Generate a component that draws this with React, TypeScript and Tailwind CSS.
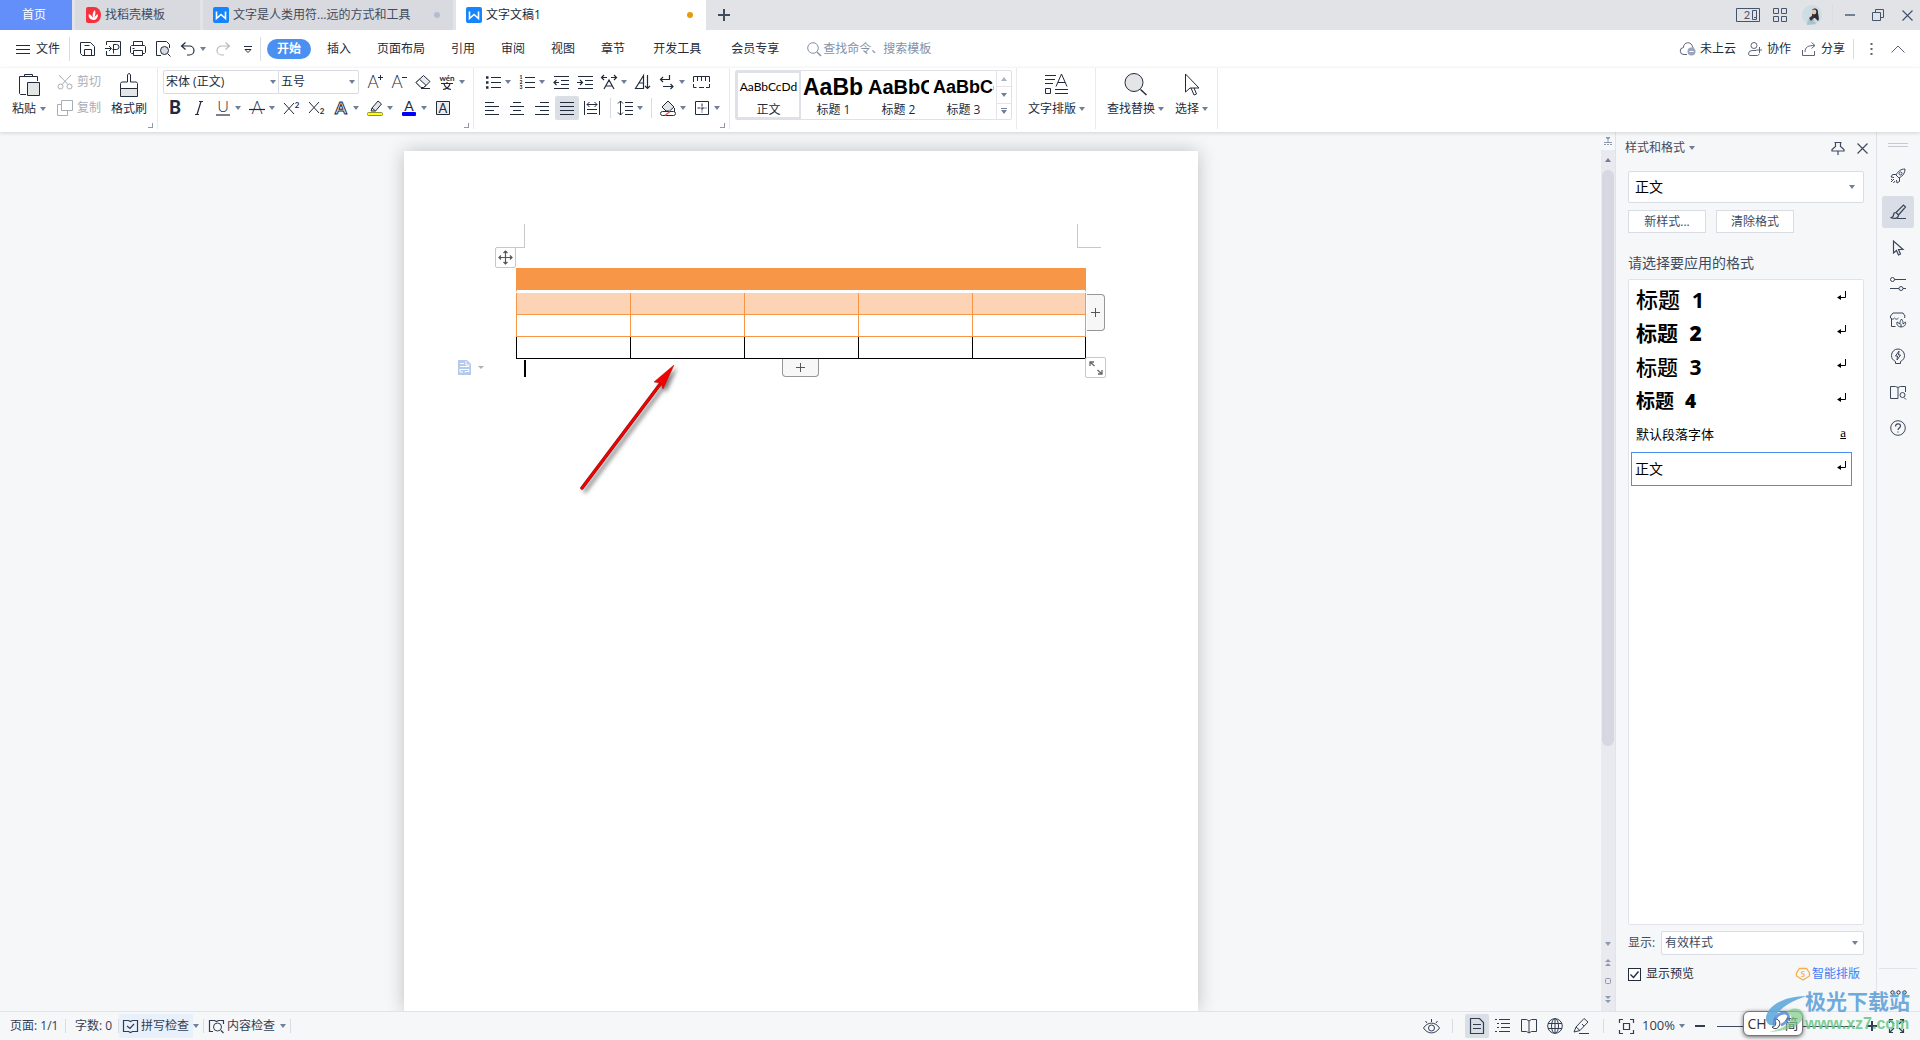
import type { ReactNode } from 'react'

type IconProps = { w?: number; h?: number; className?: string; children?: ReactNode }

function Icon({ w = 16, h = 16, className = '', children }: IconProps) {
  return (
    <svg
      width={w}
      height={h}
      viewBox={`0 0 ${w} ${h}`}
      fill="none"
      stroke="currentColor"
      className={`shrink-0 overflow-visible ${className}`}
      aria-hidden="true"
    >
      {children}
    </svg>
  )
}

function Caret({ className = '' }: { className?: string }) {
  return (
    <svg width="6" height="4" viewBox="0 0 6 4" className={`shrink-0 fill-[#6f7f99] ${className}`} aria-hidden="true">
      <path d="M0 0h6L3 4z" />
    </svg>
  )
}

function Letter({ x = 8, y = 14, size = 16, weight = 300, children }: { x?: number; y?: number; size?: number; weight?: number; children: ReactNode }) {
  return (
    <text x={x} y={y} fontSize={size} fontWeight={weight} textAnchor="middle" fill="currentColor" stroke="none" fontFamily="Lato, sans-serif">
      {children}
    </text>
  )
}

function Tool({ label, icon, caret }: { label: string; icon: ReactNode; caret?: boolean }) {
  return (
    <button type="button" aria-label={label} className="flex items-center gap-1">
      {icon}
      {caret && <Caret />}
    </button>
  )
}

function CornerMark() {
  return <span className="absolute right-[4px] bottom-px h-[5px] w-[5px] border-r border-b border-[#8d99ae]" />
}

function Divider({ className = '' }: { className?: string }) {
  return <span className={`w-px shrink-0 bg-[#d9dce2] ${className}`} />
}

/* ---------- title bar ---------- */

function WriterLogo() {
  return (
    <svg width="16" height="16" viewBox="0 0 16 16" className="shrink-0" aria-hidden="true">
      <rect width="16" height="16" rx="2" fill="#1684fc" />
      <path d="M3.500 4.500v7L8 7.500l4.500 4v-7" fill="none" stroke="#fff" strokeWidth="1.600" />
    </svg>
  )
}

function TitleBar() {
  return (
    <header className="flex h-[30px] shrink-0 items-stretch bg-[#e1e3e7] text-[#414b60]">
      <button type="button" className="w-[72px] bg-[#628ffa] pr-1 text-white">
        首页
      </button>
      <button type="button" className="ml-[3px] flex w-[125px] items-center gap-1 bg-[#d8dadf] pl-[11px]">
        <svg width="15" height="16" viewBox="0 0 15 16" aria-hidden="true">
          <path d="M0 2a2 2 0 0 1 2-2h6a7 8 0 0 1 0 16H2a2 2 0 0 1-2-2z" fill="#f6303c" />
          <path d="M7 13c-4-1-5-4-4-6 2 1 3 2 4 4-1-4 0-6 2-8 1 3 0 6-1 8 1-2 2-3 4-4 0 4-2 6-5 6z" fill="#fff" />
        </svg>
        找稻壳模板
      </button>
      <button type="button" className="ml-[3px] flex w-[250px] items-center bg-[#d8dadf] pl-[10px]">
        <WriterLogo />
        <span className="ml-1">文字是人类用符...远的方式和工具</span>
        <span className="mr-[13px] ml-auto h-[6px] w-[6px] rounded-full bg-[#b4bdd0]" />
      </button>
      <button type="button" className="ml-[3px] flex w-[250px] items-center bg-white pl-[10px] text-[#222b3c]">
        <WriterLogo />
        <span className="ml-1">文字文稿1</span>
        <span className="mr-[13px] ml-auto h-[6px] w-[6px] rounded-full bg-[#e69a0c]" />
      </button>
      <button type="button" aria-label="新建标签" className="ml-3 text-[#414b60]">
        <Icon w={12} h={12}>
          <path d="M6 0v12M0 6h12" strokeWidth="2" />
        </Icon>
      </button>
      <div className="ml-auto flex items-center pr-[7px] text-[#44546f]">
        <button type="button" aria-label="窗口布局">
          <Icon w={24} h={14}>
            <path d="M.5.5h23v13H.5zM16.500 2.500h4v9h-4zM18 9.500h2" />
            <Letter x={11} y={11} size={11} weight={400}>2</Letter>
          </Icon>
        </button>
        <button type="button" aria-label="应用" className="ml-[13px]">
          <Icon w={14} h={14}>
            <path d="M.5.5h5v5h-5zM8.500.5h5v5h-5zM.5 8.500h5v5h-5zM8.500 8.500h5v5h-5z" />
          </Icon>
        </button>
        <button type="button" aria-label="账号" className="ml-[15px]">
          <svg width="20" height="20" viewBox="0 0 20 20" aria-hidden="true">
            <circle cx="10" cy="10" r="10" fill="#ccdde3" />
            <path d="M10 5c3-3 6-1 6 2s2 7 0 9l-3-3-3 0z" fill="#332a30" />
            <circle cx="12" cy="7" r="2.400" fill="#e8c5b5" />
            <path d="M5 20c0-5 2-7 6-7l3 6z" fill="#a9c4cf" />
            <path d="M7 13l4-3 1 3-3 3z" fill="#40343a" />
          </svg>
        </button>
        <Divider className="ml-[10px] h-5 bg-[#c5c9d1]" />
        <button type="button" aria-label="最小化" className="ml-3">
          <Icon w={10} h={10}><path d="M0 5h10" strokeWidth="1.400" /></Icon>
        </button>
        <button type="button" aria-label="还原" className="ml-[17px]">
          <Icon w={13} h={13}><path d="M.5 3.500h8v8h-8zM3.500 3.500v-3h8v8h-3" /></Icon>
        </button>
        <button type="button" aria-label="关闭" className="ml-[17px]">
          <Icon w={11} h={11}><path d="M.5.5l10 10M10.500.5l-10 10" strokeWidth="1.200" /></Icon>
        </button>
      </div>
    </header>
  )
}

/* ---------- menu bar ---------- */

const coreMenus = ['开始', '插入', '页面布局', '引用', '审阅', '视图', '章节']
const extraMenus = ['开发工具', '会员专享']

function MenuBar() {
  return (
    <div className="flex h-[38px] shrink-0 items-center bg-white pl-4">
      <button type="button" className="flex items-center gap-[6px]">
        <Icon w={14} h={11}><path d="M0 1.500h14M0 5.500h14M0 9.500h14" /></Icon>
        文件
      </button>
      <Divider className="mr-[10px] ml-[9px] h-6" />
      <div className="flex items-center gap-[9px]">
        <Tool label="保存" icon={<Icon><path d="M.5 1.500h10l4 4v9H2.500l-2-2zM4.500 14.500v-6h7v6M4.500 4.500h5" /></Icon>} />
        <Tool label="输出为PDF" icon={<Icon><path d="M1.500 4V.5h14v14h-14V10M0 7.500h6M4 5l2.500 2.500L4 10M8.500 12.500v-9h3a2.300 2.300 0 0 1 0 5h-4" /></Icon>} />
        <Tool label="打印" icon={<Icon><path d="M3.500 4.500v-4h9v4M3.500 12.500h-2l-1-1v-6l1-1h13l1 1v6l-1 1h-2M3.500 9.500h9v5h-9zM2.500 7.500h2" /></Icon>} />
        <Tool label="打印预览" icon={<Icon><path d="M6 14.500H1.500V.5h10l3 3V7M13 13l2.500 2.500" /><circle cx="9.500" cy="9.500" r="4" fill="#d9dce2" /></Icon>} />
        <Tool label="撤销" caret icon={<Icon><path d="M5.500 1.500l-4 3.500 4 3.500M2 5h7.500a4.500 4.500 0 0 1 0 9H7" strokeWidth="1.200" /></Icon>} />
        <Tool label="恢复" icon={<Icon className="text-[#b6bac2]"><path d="M10.500 1.500l4 3.500-4 3.500M14 5H6.500a4.500 4.500 0 0 0 0 9H9" strokeWidth="1.200" /></Icon>} />
        <Tool label="自定义快速访问工具栏" icon={<Icon><path d="M4 5.500h8M5 8.500l3 3 3-3z" /></Icon>} />
      </div>
      <Divider className="ml-1 h-6" />
      <nav className="ml-[6px] flex gap-2">
        <div className="flex gap-[6px]">
          {coreMenus.map((menu, i) => (
            <button
              key={menu}
              type="button"
              className={`h-5 rounded-full px-[10px] leading-5 ${i === 0 ? 'bg-[#4a90f2] font-bold text-white' : ''}`}
            >
              {menu}
            </button>
          ))}
        </div>
        <div className="flex gap-[10px]">
          {extraMenus.map((menu) => (
            <button key={menu} type="button" className="h-5 rounded-full px-[10px] leading-5">
              {menu}
            </button>
          ))}
        </div>
      </nav>
      <label className="ml-[18px] flex items-center gap-[2px] text-[#8390a8]">
        <Icon w={14} h={14}>
          <circle cx="6" cy="6" r="5.300" />
          <path d="M10 10l4 4" strokeWidth="1.400" />
        </Icon>
        <input aria-label="查找命令" placeholder="查找命令、搜索模板" className="w-[130px] outline-none placeholder:text-[#8390a8]" />
      </label>
      <div className="ml-auto flex items-center pr-[15px]">
        <button type="button" className="flex items-center gap-1">
          <Icon className="text-[#5b6478]">
            <path d="M7 13.500H4a3.500 3.500 0 0 1-.5-7 4.500 4.500 0 0 1 9-.5l1 1" />
            <circle cx="11.500" cy="10.500" r="4" fill="#9aa6bd" stroke="none" />
            <path d="M9.500 10.500h4" stroke="#fff" />
          </Icon>
          未上云
        </button>
        <button type="button" className="ml-3 flex items-center gap-[5px]">
          <Icon w={14} h={14} className="text-[#5b6478]">
            <circle cx="6" cy="3.500" r="3" />
            <path d="M8.500 8.500H4a3.500 3.500 0 0 0-3.500 3.500l1 1.500h8l2-1.500M11.500 5v6M8.500 8h5.500" />
          </Icon>
          协作
        </button>
        <button type="button" className="ml-[11px] flex items-center gap-[5px]">
          <Icon w={14} h={14} className="text-[#5b6478]"><path d="M.5 8v5.500h12V9M3 10c0-5 3-6.500 9.500-6.500M9.500.5l3.500 3-3.500 3" /></Icon>
          分享
        </button>
        <Divider className="ml-2 h-5" />
        <button type="button" aria-label="更多" className="ml-4 text-[#5b6478]">
          <Icon w={3} h={12}><path d="M1.500 0v2M1.500 5v2M1.500 10v2" strokeWidth="2" /></Icon>
        </button>
        <button type="button" aria-label="收起功能区" className="ml-[18px]">
          <Icon w={14} h={8} className="text-[#5b6478]"><path d="M.5 7.500L7 1l6.500 6.500" /></Icon>
        </button>
      </div>
    </div>
  )
}

/* ---------- ribbon ---------- */

function ClipboardGroup() {
  return (
    <section aria-label="剪贴板" className="relative flex w-[158px] border-r border-[#e8eaee] pt-px pl-3">
      <button type="button" className="flex flex-col items-center gap-1 pt-1">
        <Icon w={24} h={24}>
          <path d="M9 21.500H3.500l-1-1v-17h18V8M7.500 3.500v-2h8v2z" />
          <path d="M10.500 9.500h12v13h-12z" fill="#e4e5e7" />
        </Icon>
        <span className="flex items-center gap-1 leading-4">粘贴<Caret /></span>
      </button>
      <div className="ml-[11px] text-[#a9adb5]">
        <button type="button" disabled className="flex h-[26px] items-center gap-1">
          <Icon>
            <circle cx="3.500" cy="12.500" r="2.500" />
            <circle cx="12.500" cy="12.500" r="2.500" />
            <path d="M2 1l9 9.500M14 1l-9 9.500" />
          </Icon>
          剪切
        </button>
        <button type="button" disabled className="flex h-[26px] items-center gap-1">
          <Icon><path d="M4.500.5h11v10h-11zM4.500 4.500h-4v11h10v-5" /></Icon>
          复制
        </button>
      </div>
      <button type="button" className="ml-[10px] flex flex-col items-center gap-1 pt-1">
        <Icon w={20} h={24}>
          <path d="M8.500 9V2l1-1.500h1l1 1.500v7h6l1 1.500v5h-17v-5L2.500 9z" />
          <path d="M1.500 15.500h17v8h-17z" fill="#e4e5e7" />
        </Icon>
        <span className="leading-4">格式刷</span>
      </button>
      <CornerMark />
    </section>
  )
}

function FontGroup() {
  return (
    <section aria-label="字体" className="relative w-[316px] border-r border-[#e8eaee] pt-px pl-[5px]">
      <div className="flex h-[26px] items-center gap-2">
        <div className="flex h-6 w-[196px] items-center rounded-xs border border-[#d9dce2]">
          <label className="relative flex h-full w-[115px] items-center border-r border-[#d9dce2]">
            <select aria-label="字体名称" className="w-full appearance-none pl-[2px] outline-none">
              <option>宋体 (正文)</option>
            </select>
            <Caret className="absolute right-[2px]" />
          </label>
          <label className="relative flex h-full flex-1 items-center">
            <select aria-label="字号" className="w-full appearance-none pl-[2px] outline-none">
              <option>五号</option>
            </select>
            <Caret className="absolute right-[3px]" />
          </label>
        </div>
        <Tool label="增大字号" icon={<Icon><Letter x={6} y={14} size={17}>A</Letter><path d="M13.500 1v5M11 3.500h5" /></Icon>} />
        <Tool label="减小字号" icon={<Icon><Letter x={6} y={14} size={17}>A</Letter><path d="M11 3.500h5" /></Icon>} />
        <Tool label="清除格式" icon={<Icon><path d="M1 8.500L8.500 1.500l6.500 6-6 6H6z" fill="#e9eaec" /><path d="M1 8.500l3.500-3.200 6.500 6-2.500 2.200H6zM6 14.500h9" fill="#fff" /></Icon>} />
        <Tool
          label="拼音指南"
          caret
          icon={<Icon><Letter y={7} size={8} weight={700}>wén</Letter><path d="M2 9.500h12M8 8v1.500M5 10c1 3 4 5 7 5.500M11 10c-1 3-4 5-7 5.500" strokeWidth="1.200" /></Icon>}
        />
      </div>
      <div className="flex h-[26px] items-center gap-2 pl-1">
        <Tool label="加粗" icon={<Icon><Letter y={14} size={18} weight={900}>B</Letter></Icon>} />
        <Tool label="倾斜" icon={<Icon><path d="M8 1.500h4M4 14.500h4M10 1.500L6 14.500" strokeWidth="1.200" /></Icon>} />
        <Tool label="下划线" caret icon={<Icon><Letter y={12} size={16}>U</Letter><path d="M1 15h14" strokeWidth="1.200" /></Icon>} />
        <Tool label="删除线" caret icon={<Icon><Letter y={14} size={17}>A</Letter><path d="M0 9.500h16" strokeWidth="1.200" /></Icon>} />
        <Tool label="上标" icon={<Icon w={17}><path d="M1 3l10 11M11 3L1 14" /><Letter x={14} y={8} size={8} weight={700}>2</Letter></Icon>} />
        <Tool label="下标" icon={<Icon w={17}><path d="M1 2l10 11M11 2L1 13" /><Letter x={14} y={14} size={8} weight={700}>2</Letter></Icon>} />
        <Tool
          label="文字效果"
          caret
          icon={
            <Icon>
              <text x="8" y="14" fontSize="17" fontWeight="700" textAnchor="middle" fill="#fff" stroke="currentColor" strokeWidth="1" fontFamily="Lato, sans-serif">A</text>
            </Icon>
          }
        />
        <Tool
          label="突出显示"
          caret
          icon={<Icon><path d="M5 8l6-7 3.500 3-6 7zM5 8l-1 3h4.500" fill="#e4e5e7" /><rect x=".5" y="12.500" width="15" height="3" rx="1" fill="#ff0" stroke="#8a8f3a" /></Icon>}
        />
        <Tool label="字体颜色" caret icon={<Icon><Letter y={11} size={14} weight={400}>A</Letter><rect x="1" y="12" width="14" height="4" rx="1" fill="#00f" stroke="none" /></Icon>} />
        <Tool label="字符底纹" icon={<Icon><path d="M1.500 1.500h13v13h-13z" fill="#ebecee" /><Letter y={13} size={13} weight={400}>A</Letter></Icon>} />
      </div>
      <CornerMark />
    </section>
  )
}

const alignIcons = [
  { label: '左对齐', d: 'M1 2.500h9M1 6.500h14M1 10.500h9M1 14.500h14' },
  { label: '居中对齐', d: 'M4 2.500h8M1 6.500h14M4 10.500h8M1 14.500h14' },
  { label: '右对齐', d: 'M6 2.500h9M1 6.500h14M6 10.500h9M1 14.500h14' },
  { label: '两端对齐', d: 'M1 2.500h14M1 6.500h14M1 10.500h14M1 14.500h14' },
  { label: '分散对齐', d: 'M.5 1v14M15.500 1v14M3 4.500h10M5.500 2L3 4.500 5.500 7M10.500 2L13 4.500 10.500 7M3 9.500h10M3 13.500h10' },
]

function ParagraphGroup() {
  return (
    <section aria-label="段落" className="relative w-[256px] border-r border-[#e8eaee] pt-px">
      <div className="flex h-[26px] items-center gap-2 pl-[11px]">
        <Tool label="项目符号" caret icon={<Icon><path d="M6 3.500h10M6 8.500h10M6 13.500h10" /><path d="M1 3.500h2.500M1 8.500h2.500M1 13.500h2.500" strokeWidth="2.500" /></Icon>} />
        <Tool
          label="编号"
          caret
          icon={<Icon><path d="M6 3.500h10M6 8.500h10M6 13.500h10" /><Letter x={2} y={5} size={5} weight={900}>1</Letter><Letter x={2} y={10} size={5} weight={900}>2</Letter><Letter x={2} y={15} size={5} weight={900}>3</Letter></Icon>}
        />
        <Tool label="减少缩进量" icon={<Icon><path d="M1 2.500h15M8 6.500h8M8 10.500h8M1 14.500h15M1 8.500h5M3.500 6L1 8.500 3.500 11" strokeWidth="1.200" /></Icon>} />
        <Tool label="增加缩进量" icon={<Icon><path d="M1 2.500h15M8 6.500h8M8 10.500h8M1 14.500h15M0 8.500h5.500M3 6l2.500 2.500L3 11" strokeWidth="1.200" /></Icon>} />
        <Tool label="中文版式" caret icon={<Icon><path d="M3 15l5-9 5 9M5 12h6M.5 3.500H6M3 1L.5 3.500 3 6M10 3.500h5.500M13 1l2.500 2.500L13 6" strokeWidth="1.200" /></Icon>} />
        <Tool label="排序" icon={<Icon><path d="M.5 14.500L8.500 1.500v13zM4 9h4.500M12.500 1v13M10 12l2.500 2.500L15 12" strokeWidth="1.200" /></Icon>} />
        <Tool label="显示/隐藏编辑标记" caret icon={<Icon><path d="M10.500 1v4.500H1.500M4 3L1.500 5.500 4 8M4 12.500h10M11.500 10l2.500 2.500-2.500 2.500" strokeWidth="1.200" /></Icon>} />
        <Tool label="制表位" icon={<Icon><path d="M.5 8V2.500h16V8M4.500 3v4M8.500 3v4M12.500 3v4M.5 10v3.500h3M6 13.500h5M13 13.500h3.500V10" /></Icon>} />
      </div>
      <div className="flex h-[26px] items-center pl-[6px]">
        <div className="flex gap-px">
          {alignIcons.map(({ label, d }) => (
            <button
              key={label}
              type="button"
              aria-label={label}
              className={`flex h-6 w-6 items-center justify-center rounded-xs ${label === '两端对齐' ? 'bg-[#dadfe5]' : ''}`}
            >
              <Icon><path d={d} /></Icon>
            </button>
          ))}
        </div>
        <Divider className="mx-[6px] h-5" />
        <Tool label="行距" caret icon={<Icon><path d="M3.500 1v14M1 3.500L3.500 1 6 3.500M1 12.500L3.500 15 6 12.500M8 2.500h8M8 6.500h8M8 10.500h8M8 14.500h8" /></Icon>} />
        <Divider className="mx-2 h-5" />
        <Tool
          label="底纹颜色"
          caret
          icon={<Icon><path d="M2 7l6-6 6 6-4.500 4H6z" fill="#e4e5e7" /><path d="M14.500 8v4" /><rect x=".5" y="11.500" width="15" height="4" rx="2" fill="#fff" /><path d="M5 15.500l5-4" stroke="#e05a5a" strokeWidth="1.500" /></Icon>}
        />
        <span className="w-2" />
        <Tool label="边框" caret icon={<Icon><path d="M1.500 1.500h13v13h-13z" /><path d="M8 3.500v9M3.500 8h9" strokeDasharray="3 1" /></Icon>} />
      </div>
      <CornerMark />
    </section>
  )
}

const stylePresets = [
  { name: '正文', sample: 'AaBbCcDd', cls: "text-xs font-['Lato']" },
  { name: '标题 1', sample: 'AaBb', cls: "text-[23px] font-bold font-['Liberation_Sans']" },
  { name: '标题 2', sample: 'AaBbC', cls: "text-[20px] font-bold font-['Liberation_Sans']" },
  { name: '标题 3', sample: 'AaBbCc', cls: "text-[18px] font-bold font-['Liberation_Sans']" },
]

function StylesGroup() {
  return (
    <section aria-label="样式" className="w-[287px] border-r border-[#e8eaee] pt-[2px] pl-[5px]">
      <div className="flex h-[50px] w-[277px] rounded-xs border border-[#dfe1e6]">
        {stylePresets.map(({ name, sample, cls }, i) => (
          <button
            key={name}
            type="button"
            className={`flex w-[65px] flex-col items-center overflow-hidden px-[2px] ${i === 0 ? 'outline-2 -outline-offset-2 outline-[#dfe1e8]' : ''}`}
          >
            <span className={`flex h-8 w-full items-center overflow-hidden whitespace-nowrap text-black ${i === 0 ? 'justify-center' : ''} ${cls}`}>
              {sample}
            </span>
            <span className="leading-[14px]">{name}</span>
          </button>
        ))}
        <div className="flex flex-1 flex-col divide-y divide-[#e3e5ea] border-l border-[#e3e5ea]">
          <button type="button" aria-label="上一行" className="flex flex-1 items-center justify-center"><Caret className="rotate-180 opacity-60" /></button>
          <button type="button" aria-label="下一行" className="flex flex-1 items-center justify-center"><Caret /></button>
          <button type="button" aria-label="更多样式" className="flex flex-1 flex-col items-center justify-center gap-px">
            <span className="h-px w-[6px] bg-[#6f7f99]" />
            <Caret />
          </button>
        </div>
      </div>
    </section>
  )
}

function BigTool({ label, icon, className = '' }: { label: string; icon: ReactNode; className?: string }) {
  return (
    <button type="button" className={`flex flex-col items-center gap-1 pt-[5px] ${className}`}>
      {icon}
      <span className="flex items-center gap-[3px] leading-4">{label}<Caret /></span>
    </button>
  )
}

function Ribbon() {
  return (
    <div className="z-10 flex h-16 shrink-0 bg-white pb-[3px] shadow-[0_1px_4px_rgba(0,0,0,0.15)]">
      <ClipboardGroup />
      <FontGroup />
      <ParagraphGroup />
      <StylesGroup />
      <section aria-label="排版" className="w-[79px] border-r border-[#e8eaee] pl-[11px]">
        <BigTool
          label="文字排版"
          icon={<Icon w={24} h={24}><path d="M0 2.500h11M0 6.500h10M0 10.500h8M10 20.500h13M10 16.500h13M.5 15.500h5v5h-5z" /><path d="M11 13.500L16.500 1l5.500 12.500M13 9.500h7" /></Icon>}
        />
      </section>
      <section aria-label="编辑" className="flex w-[122px] border-r border-[#e8eaee] pl-[11px]">
        <BigTool
          label="查找替换"
          icon={<Icon w={24} h={24}><circle cx="10" cy="9.500" r="9" fill="#e4e5e7" /><path d="M16.500 16.500l6 5.500" strokeWidth="1.500" /></Icon>}
        />
        <BigTool
          className="ml-[11px]"
          label="选择"
          icon={<Icon w={20} h={24}><path d="M3.500 1v18l4.500-4h9zM9 15l3 7 2.500-1-2.500-6" /></Icon>}
        />
      </section>
    </div>
  )
}

/* ---------- document ---------- */

const orangeCell = 'h-[22px] border-b border-l border-[#f79646] last:border-r'
const bodyRows = [
  `${orangeCell} bg-[#fcd4b5]`,
  orangeCell,
  'h-[22px] border-b border-l border-black last:border-r',
]

function DocumentTable() {
  return (
    <div className="relative">
      <table className="w-full table-fixed border-separate border-spacing-0">
        <tbody>
          <tr>
            <td colSpan={5} className="h-[25px] border-x border-b-3 border-x-[#f79646] border-b-white bg-[#f79646] p-0" />
          </tr>
          {bodyRows.map((cls, row) => (
            <tr key={row}>
              {[0, 1, 2, 3, 4].map((col) => (
                <td key={col} className={`p-0 ${cls}`} />
              ))}
            </tr>
          ))}
        </tbody>
      </table>

      {/* margin corners */}
      <span className="absolute -top-[44px] -left-[15px] h-6 w-6 border-r border-b border-[#c8c8c8]" />
      <span className="absolute -top-[44px] -right-[15px] h-6 w-6 border-b border-l border-[#c8c8c8]" />

      <button type="button" aria-label="移动表格" className="absolute -top-[21px] -left-[21px] flex h-[21px] w-[21px] items-center justify-center rounded-xs border border-[#c8c8c8] bg-white text-[#555]">
        <Icon w={15} h={15}>
          <path d="M7.500 1v13M1 7.500h13M5.500 3l2-2 2 2M5.500 12l2 2 2-2M3 5.500l-2 2 2 2M12 5.500l2 2-2 2" strokeWidth="1.200" />
        </Icon>
      </button>
      <button type="button" aria-label="添加列" className="absolute top-[26px] left-full ml-px flex h-[37px] w-[18px] items-center justify-center rounded-r border border-l-0 border-[#969696] bg-[#f7f7f7] text-[#555]">
        <Icon w={9} h={9}><path d="M4.500 0v9M0 4.500h9" /></Icon>
      </button>
      <button type="button" aria-label="添加行" className="absolute top-full left-[266px] flex h-[18px] w-[37px] items-center justify-center rounded-b border border-t-0 border-[#969696] bg-[#f7f7f7] text-[#555]">
        <Icon w={9} h={9}><path d="M4.500 0v9M0 4.500h9" /></Icon>
      </button>
      <button type="button" aria-label="调整表格大小" className="absolute top-[89px] -right-[20px] flex h-[21px] w-[21px] items-center justify-center rounded-xs border border-[#c8c8c8] bg-white text-[#666]">
        <Icon w={14} h={14}><path d="M1 5V1h4M1 1l4.500 4M13 9v4H9M13 13L8.500 9" strokeWidth="1.300" /></Icon>
      </button>

      {/* paragraph marker and text cursor */}
      <button type="button" aria-label="段落选项" className="absolute top-[92px] -left-[58px] flex items-center gap-[7px]">
        <svg width="13" height="15" viewBox="0 0 13 15" aria-hidden="true">
          <path d="M0 0h9l4 4v11H0z" fill="#b5c9ea" />
          <path d="M2 3.500h4M2 6.500h9M2 9.500h9v2H7v1M2 9v3h3M8 1v4h4" fill="none" stroke="#fff" />
        </svg>
        <svg width="6" height="3" viewBox="0 0 6 3" aria-hidden="true"><path d="M0 0h6L3 3z" fill="#b0b0b0" /></svg>
      </button>
      <span className="absolute top-[92px] left-2 h-[17px] w-[2px] bg-black" />

      {/* pointer arrow */}
      <svg width="110" height="140" viewBox="0 0 110 140" className="absolute top-[91px] left-[57px] drop-shadow-[3px_3px_2px_rgba(0,0,0,0.5)]" aria-hidden="true">
        <path d="M9 129L88 24" stroke="#8c1010" strokeWidth="3.500" strokeLinecap="round" />
        <path d="M9 129L88 24" stroke="#f40000" strokeWidth="2.200" strokeLinecap="round" />
        <path d="M101 6L81 23l7 1 2 6z" fill="#f40000" stroke="#a01010" strokeWidth=".5" />
      </svg>
    </div>
  )
}

function VerticalScroll() {
  return (
    <div className="flex w-[14px] shrink-0 flex-col items-center bg-[#e9eaf0] text-[#8d99ae]">
      <div className="flex h-[18px] w-full items-center justify-center bg-[#f5f7f9]">
        <Icon w={8} h={8}><path d="M0 5.500h8M0 7.500h2M3 7.500h2M6 7.500h2M4 3v2" /><path d="M2 0h4v1L4 3 2 1z" fill="currentColor" stroke="none" /></Icon>
      </div>
      <button type="button" aria-label="向上滚动" className="flex h-5 items-center"><Caret className="rotate-180" /></button>
      <div className="flex w-full flex-1 flex-col px-px">
        <span className="h-[576px] max-h-full rounded-full bg-[#d5d8e1]" />
      </div>
      <div className="flex flex-col items-center gap-[12px] pb-2">
        <button type="button" aria-label="向下滚动"><Icon w={6} h={6}><path d="M0 1h6L3 5z" fill="currentColor" stroke="none" /></Icon></button>
        <button type="button" aria-label="上一页"><Icon w={6} h={7}><path d="M0 3h6L3 0zM0 7h6L3 4z" fill="currentColor" stroke="none" /></Icon></button>
        <button type="button" aria-label="选择浏览对象"><Icon w={6} h={6}><rect x=".5" y=".5" width="5" height="5" rx="1" /></Icon></button>
        <button type="button" aria-label="下一页"><Icon w={6} h={7}><path d="M0 0h6L3 3zM0 4h6L3 7z" fill="currentColor" stroke="none" /></Icon></button>
      </div>
    </div>
  )
}

/* ---------- styles pane ---------- */

const paneStyles = [
  { text: '标题', num: '1', cls: 'text-[22px] font-medium' },
  { text: '标题', num: '2', cls: 'text-[21px] font-bold' },
  { text: '标题', num: '3', cls: 'text-[21px] font-medium' },
  { text: '标题', num: '4', cls: 'text-[19px] font-bold' },
]

function ReturnMark() {
  return (
    <Icon w={10} h={9} className="mb-[7px] text-black">
      <path d="M8.500 0v6.500H2" />
      <path d="M0 6.500L4 4v5z" fill="currentColor" stroke="none" />
    </Icon>
  )
}

function StylesPane() {
  return (
    <aside className="flex w-[262px] shrink-0 flex-col border-x border-[#e1e3e9] bg-[#f5f7f9] pr-3 pb-[27px] pl-3 text-[#414b60]">
      <div className="-ml-[3px] flex h-8 shrink-0 items-center">
        <button type="button" className="flex items-center gap-1">样式和格式<Caret /></button>
        <button type="button" aria-label="固定" className="ml-auto">
          <Icon w={14} h={13}><path d="M3.500.5h7M4.500.5v4l-3.500 3v1.500h12V7.500l-3.500-3v-4M7 9v4" strokeWidth="1.200" /></Icon>
        </button>
        <button type="button" aria-label="关闭窗格" className="mr-[-4px] ml-3">
          <Icon w={11} h={11}><path d="M.5.5l10 10M10.500.5l-10 10" strokeWidth="1.200" /></Icon>
        </button>
      </div>
      <label className="relative mt-[7px] flex items-center">
        <select aria-label="当前样式" className="h-8 w-full appearance-none rounded-xs border border-[#d9dce2] bg-white pl-[6px] text-sm text-black outline-none">
          <option>正文</option>
        </select>
        <Caret className="absolute right-[9px]" />
      </label>
      <div className="mt-[7px] flex gap-[10px]">
        <button type="button" className="h-[23px] w-[78px] border border-[#d9dce2] bg-white">新样式...</button>
        <button type="button" className="h-[23px] w-[78px] border border-[#d9dce2] bg-white">清除格式</button>
      </div>
      <h2 className="mt-5 text-sm leading-5">请选择要应用的格式</h2>
      <ul className="mt-[6px] flex-1 rounded-xs border border-[#e1e3e9] bg-white pt-[2px] pr-[11px] pl-[2px] text-black">
        {paneStyles.map(({ text, num, cls }) => (
          <li key={num}>
            <button type="button" className={`flex h-[34px] w-full items-center justify-between pr-[5px] pl-[5px] ${cls}`}>
              <span className="leading-8">{text} <b className="ml-[6px]">{num}</b></span>
              <ReturnMark />
            </button>
          </li>
        ))}
        <li>
          <button type="button" className="flex h-[34px] w-full items-center justify-between pr-[6px] pl-[5px] text-[13px]">
            默认段落字体
            <span className="mb-1 font-['Liberation_Serif'] underline">a</span>
          </button>
        </li>
        <li>
          <button type="button" className="flex h-[34px] w-full items-center justify-between border border-[#4a8ef0] pr-1 pl-[3px] text-sm">
            正文
            <ReturnMark />
          </button>
        </li>
      </ul>
      <div className="mt-[6px] flex items-center justify-between">
        <label htmlFor="style-filter">显示:</label>
        <div className="relative flex w-[203px] items-center">
          <select id="style-filter" className="h-6 w-full appearance-none rounded-xs border border-[#d9dce2] bg-white pl-[3px] outline-none">
            <option>有效样式</option>
          </select>
          <Caret className="absolute right-[6px]" />
        </div>
      </div>
      <div className="mt-[9px] flex h-5 shrink-0 items-center justify-between">
        <label className="relative flex items-center gap-[5px] text-[#222b3c]">
          <input type="checkbox" defaultChecked className="peer h-[13px] w-[13px] appearance-none border border-[#222b3c] bg-white" />
          <Icon w={13} h={13} className="pointer-events-none absolute left-0 hidden peer-checked:block"><path d="M2.500 6.500l3 3 5-6" strokeWidth="1.400" /></Icon>
          显示预览
        </label>
        <button type="button" className="mr-1 flex items-center gap-[2px] text-[#3f7df6]">
          <Icon w={14} h={14} className="text-[#f5b04a]">
            <path d="M3.500 1.500h7L13.500 6v3L7 13 .5 9V6z" strokeWidth="1.300" />
            <Letter x={7} y={10} size={8} weight={700}>S</Letter>
          </Icon>
          智能排版
        </button>
      </div>
    </aside>
  )
}

const railTools = [
  { label: '快捷', icon: <Icon><path d="M15 1c-4 0-7 2-9 6l3 3c4-2 6-5 6-9zM6 6.500H2.500L1 9l3 .5M9.500 10v3.500L7 15l-.5-3M4 11l-3 3M2 11l-1 1M5 13l-1.500 2" /><circle cx="10.500" cy="5.500" r="1.500" /></Icon> },
  { label: '样式和格式', icon: <Icon><path d="M6 8.500l7.500-7.500 2 2L8.500 11zM6 8.500c-2 0-2.500 1-2.500 2.500S2 13.500.5 13.500c3 1.500 8 1.500 8-2.500M7 14.500h9" strokeWidth="1.200" /></Icon> },
  { label: '选择窗格', icon: <Icon><path d="M3.500 1v12l3-2.500 2 4.500 2-1-2-4.500H13z" strokeWidth="1.200" /></Icon> },
  { label: '属性', icon: <Icon><circle cx="2.500" cy="3.500" r="2" /><path d="M4.500 3.500H16M0 12.500h9M13 12.500h3" strokeWidth="1.200" /><circle cx="11" cy="12.500" r="2" /></Icon> },
  { label: '素材库', icon: <Icon><path d="M1.500 6v8.500h4M14.500 6l.5-2-2-3H3L.5 4v2c1 1.500 3 1.500 4 0 1 1.500 3 1.500 4 0" /><path d="M11 15c-4-.5-4.500-3-4-5l3 2c0-2 0-3 1.500-5 1.500 2 1.500 3 1.500 5l2.500-2c.5 2 0 4.500-4.500 5zM11 15v-3" /></Icon> },
  { label: '灵感', icon: <Icon><path d="M5.500 13.500C2.500 12 1.500 10 1.500 7.500a6.500 6.500 0 0 1 13 0c0 2.500-1 4.500-4 6v2h-5z" /><path d="M9 3L5.500 8h2L7 12l3.500-5h-2z" /></Icon> },
  { label: '词典', icon: <Icon><path d="M8 14.500H.5v-12h5L8 3.500l2.500-1h5V8M8 3.500v11M14 13.500l2 2" /><circle cx="12.500" cy="11" r="2.500" /></Icon> },
  { label: '帮助', icon: <Icon><circle cx="8" cy="8" r="7.300" /><path d="M5.500 6.500c0-3.500 5-3.500 5-.5 0 2-2.500 2-2.500 4M8 11.500v1" strokeWidth="1.200" /></Icon> },
]

function SideRail() {
  return (
    <div className="flex w-[43px] shrink-0 flex-col items-center bg-[#f5f7f9] pt-[11px] pr-px">
      <span className="h-1 w-5 border-y border-[#c5c9d1]" />
      <div className="mt-[13px] flex flex-col gap-1">
        {railTools.map(({ label, icon }, i) => (
          <button
            key={label}
            type="button"
            aria-label={label}
            className={`flex h-8 w-8 items-center justify-center rounded-xs ${i === 1 ? 'bg-[#d9dee6]' : ''} text-[#3b465c]`}
          >
            {icon}
          </button>
        ))}
      </div>
      <span className="mt-auto h-px w-[38px] bg-[#e1e3e9]" />
      <button type="button" aria-label="更多工具" className="mt-[21px] mb-4">
        <Icon w={17} h={5}><circle cx="2.500" cy="2.500" r="1.700" /><circle cx="8.500" cy="2.500" r="1.700" /><circle cx="14.500" cy="2.500" r="1.700" /></Icon>
      </button>
    </div>
  )
}

/* ---------- status bar ---------- */

function StatusBar() {
  return (
    <footer className="flex h-[29px] shrink-0 items-center border-t border-[#e1e3e9] bg-[#f5f7f9] pl-[10px] text-[#333d52]">
      <span className="w-[55px]">页面: 1/1</span>
      <Divider className="h-[14px]" />
      <span className="w-[52px] pl-[9px]">字数: 0</span>
      <Divider className="h-[14px]" />
      <button type="button" className="flex h-6 items-center gap-[3px] bg-[#e8f0fb] px-1">
        <Icon w={15} h={14}><path d="M.5 1.500h5l2 1 2-1h5v11h-5l-2 1-2-1h-5zM4 7l3 2.500L11 5" strokeWidth="1.200" /></Icon>
        拼写检查
      </button>
      <button type="button" aria-label="拼写检查选项" className="mr-1"><Caret /></button>
      <Divider className="h-[14px]" />
      <button type="button" className="ml-[5px] flex items-center gap-[3px]">
        <Icon w={15} h={14}><path d="M4 12.500H.5v-11h5l2 1 2-1h5V5M12 11.500l2.500 2.500" strokeWidth="1.200" /><circle cx="8.500" cy="8" r="4" /></Icon>
        内容检查
        <Caret className="ml-[2px]" />
      </button>
      <Divider className="ml-1 h-[14px]" />

      <div className="ml-auto flex items-center pr-4">
        <Tool label="护眼模式" icon={<Icon w={17}><path d="M.5 10c4-6.500 12-6.500 16 0-4 6.500-12 6.500-16 0zM8.500 1v3M2.500 3l1.500 2M14.500 3L13 5" /><circle cx="8.500" cy="10" r="3" /></Icon>} />
        <Divider className="mx-3 h-[14px]" />
        <div className="flex gap-[2px]">
          <button type="button" aria-label="页面视图" className="flex h-6 w-6 items-center justify-center rounded-xs bg-[#dadfe5]">
            <Icon><path d="M1.500.5h9l4 4v11h-13zM4 6.500h8M4 10.500h8" strokeWidth="1.200" /></Icon>
          </button>
          <button type="button" aria-label="大纲" className="flex h-6 w-6 items-center justify-center">
            <Icon><path d="M0 1.500h2M4 1.500h11M2 5.500h2M6 5.500h9M2 9.500h2M6 9.500h9M0 13.500h2M4 13.500h11" strokeWidth="1.200" /></Icon>
          </button>
          <button type="button" aria-label="阅读版式" className="flex h-6 w-6 items-center justify-center">
            <Icon><path d="M.5 1.500h5L8 3l2.500-1.500h5v12h-5L8 15l-2.500-1.500h-5zM8 3v12" /></Icon>
          </button>
          <button type="button" aria-label="Web版式" className="flex h-6 w-6 items-center justify-center">
            <Icon><circle cx="8" cy="8" r="7.300" /><ellipse cx="8" cy="8" rx="3.500" ry="7.300" /><path d="M1 5.500h14M1 10.500h14M8 1v14" /></Icon>
          </button>
          <button type="button" aria-label="写作模式" className="flex h-6 w-6 items-center justify-center">
            <Icon><path d="M1 14l2-5L11 .5l4 3.500-8 8.500zM3 9l4 3.500M9 6l2 2M6 15.500h10" /></Icon>
          </button>
        </div>
        <Divider className="mx-[10px] h-[14px]" />
        <button type="button" aria-label="最佳显示比例" className="ml-[5px]">
          <Icon w={15} h={15}><path d="M.5 4V.5H4M11 .5h3.500V4M14.500 11v3.500H11M4 14.500H.5V11M4.500 4.500h6v6h-6z" strokeWidth="1.200" /></Icon>
        </button>
        <button type="button" className="ml-2 flex items-center gap-1 text-[13px]">100%<Caret /></button>
        <button type="button" aria-label="缩小" className="ml-[10px]"><Icon w={10} h={10}><path d="M0 5h10" strokeWidth="2" /></Icon></button>
        <input type="range" aria-label="显示比例" defaultValue={50} className="mx-3 h-px w-[138px] appearance-none bg-[#3b4860]" />
        <button type="button" aria-label="放大"><Icon w={10} h={10}><path d="M0 5h10M5 0v10" strokeWidth="2" /></Icon></button>
        <button type="button" aria-label="全屏" className="ml-3">
          <Icon w={15} h={14}><path d="M.5 4V.5H4M11 .5h3.500V4M14.500 10v3.500H11M4 13.500H.5V10M1 1l4 4M14 1l-4 4M14 13l-4-4M1 13l4-4" strokeWidth="1.200" /></Icon>
        </button>
      </div>
    </footer>
  )
}

/* input method badge and site mark, both float over the window corner */
function FloatingBadges() {
  return (
    <>
      <div className="absolute right-[117px] bottom-1 z-20 flex h-[25px] w-[60px] items-center justify-center gap-1 rounded-md border border-[#777] bg-white text-sm text-[#333] shadow-[0_1px_4px_rgba(0,0,0,0.6)]">
        CH
        <Icon w={10} h={12}><path d="M3 1c5-1 7 4 5 7-1 3-5 3.500-7 1 4 0 5-5 2-8z" /></Icon>
        简
      </div>
      <div className="pointer-events-none absolute right-[10px] bottom-[5px] z-30 flex items-end">
        <svg width="45" height="40" viewBox="0 0 48 42" className="-mr-1" aria-hidden="true">
          <path d="M46 1C24 0 4 10 2 24c0 6 4 9 9 8-3-9 9-24 35-31z" fill="#5fa8dc" opacity=".9" />
          <path d="M38 15c9 6 4 22-32 24 14-3 22-9 23-15 0-4-3-5-7-5 6-5 11-6 16-4z" fill="#7cc98a" opacity=".7" />
          <path d="M11 32c-1-8 5-14 12-13 6 2 3 9-5 13" fill="none" stroke="#4b84cf" strokeWidth="3" opacity=".8" />
        </svg>
        <div className="font-['Liberation_Sans','Noto_Sans_CJK_SC',sans-serif]">
          <p className="text-[21px] leading-[22px] font-bold text-[#5c9fd8]/90">极光下载站</p>
          <p className="text-base leading-[22px] font-bold text-[#6cc88a]/90">www.xz7.com</p>
        </div>
      </div>
    </>
  )
}

export default function App() {
  return (
    <div className="relative flex h-screen flex-col overflow-hidden bg-[#f5f7f9] font-['Open_Sans','Noto_Sans_CJK_SC',sans-serif] text-xs text-[#222b3c]">
      <TitleBar />
      <MenuBar />
      <Ribbon />
      <div className="flex min-h-0 flex-1">
        <main className="flex min-w-0 flex-1 justify-center overflow-hidden pt-[19px] pl-px">
          <article className="w-[794px] bg-white px-[112px] pt-[117px] shadow-[0_0_18px_rgba(0,0,0,0.22)]">
            <DocumentTable />
          </article>
        </main>
        <VerticalScroll />
        <StylesPane />
        <SideRail />
      </div>
      <StatusBar />
      <FloatingBadges />
    </div>
  )
}
